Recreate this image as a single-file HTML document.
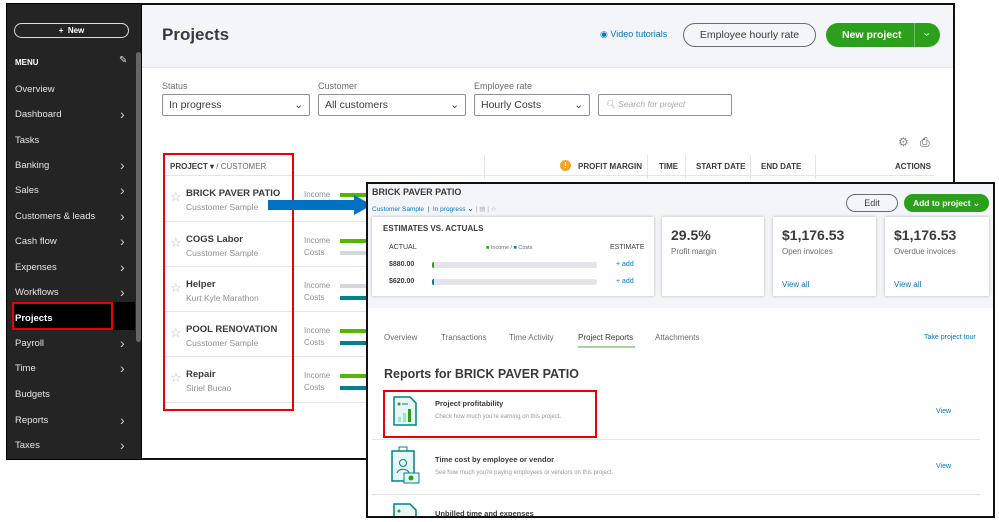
<!DOCTYPE html>
<html><head><meta charset="utf-8"><style>
*{box-sizing:border-box;margin:0;padding:0}
body{width:999px;height:522px;background:#fff;position:relative;overflow:hidden;font-family:"Liberation Sans",sans-serif;color:#393a3d}
.a{position:absolute}
.sb{left:6px;top:3px;width:136px;height:457px;background:#242424;border:1px solid #000}
.mi{position:absolute;left:8px;font-size:9.5px;color:#e6e6e6}
.ch{position:absolute;left:113px;font-size:14px;color:#ccc;line-height:14px}
.main{left:142px;top:3px;width:813px;height:457px;background:#fff;border:2px solid #111;border-left:none}
.lbl{font-size:9px;color:#6b6c72}
.sel{height:22px;border:1px solid #8d9096;border-radius:2px;font-size:10.5px;padding:4px 6px;color:#393a3d}
.row{position:absolute;left:164px;width:770px;border-top:1px solid #e3e5e8}
.nm{position:absolute;left:22px;font-size:9.5px;font-weight:bold;color:#393a3d}
.cu{position:absolute;left:22px;font-size:8.5px;color:#8d9096}
.st{position:absolute;left:6px;font-size:13px;color:#bbb}
.ic{position:absolute;left:140px;font-size:8px;color:#8d9096}
.bar{position:absolute;left:176px;height:4px;width:30px}
.card{position:absolute;background:#fff;box-shadow:0 0 3px rgba(0,0,0,.25);top:217px;height:79px}
.big{font-size:14px;font-weight:bold;color:#393a3d}
.sm{font-size:8px;color:#6b6c72}
.blue{color:#0077c5}
</style></head><body>
<div class="a sb">
 <div class="a" style="left:7px;top:19px;width:115px;height:15px;border:1px solid #ddd;border-radius:8px;color:#fff;font-size:8px;font-weight:bold;text-align:center;line-height:13px">+&nbsp; New</div>
 <div class="mi" style="top:54px;font-weight:bold;font-size:8px;color:#fff">MENU</div>
 <div class="a" style="left:112px;top:51px;color:#ddd;font-size:10px">✎</div>
 <div class="a" style="left:129px;top:48px;width:5px;height:290px;background:#666;border-radius:3px"></div>
 <div class="mi" style="top:80px">Overview</div>
 <div class="mi" style="top:105px">Dashboard</div><div class="ch" style="top:103px">›</div>
 <div class="mi" style="top:131px">Tasks</div>
 <div class="mi" style="top:156px">Banking</div><div class="ch" style="top:154px">›</div>
 <div class="mi" style="top:181px">Sales</div><div class="ch" style="top:179px">›</div>
 <div class="mi" style="top:207px">Customers &amp; leads</div><div class="ch" style="top:205px">›</div>
 <div class="mi" style="top:232px">Cash flow</div><div class="ch" style="top:230px">›</div>
 <div class="mi" style="top:258px">Expenses</div><div class="ch" style="top:256px">›</div>
 <div class="mi" style="top:283px">Workflows</div><div class="ch" style="top:281px">›</div>
 <div class="a" style="left:5px;top:298px;width:123px;height:28px;background:#000"></div>
 <div class="a" style="left:5px;top:298px;width:101px;height:28px;border:2px solid #e00"></div>
 <div class="mi" style="top:309px;color:#fff;font-weight:bold">Projects</div>
 <div class="mi" style="top:334px">Payroll</div><div class="ch" style="top:332px">›</div>
 <div class="mi" style="top:359px">Time</div><div class="ch" style="top:357px">›</div>
 <div class="mi" style="top:385px">Budgets</div>
 <div class="mi" style="top:411px">Reports</div><div class="ch" style="top:409px">›</div>
 <div class="mi" style="top:436px">Taxes</div><div class="ch" style="top:434px">›</div>
</div>
<div class="a main">
 <div class="a" style="left:0;top:0;width:811px;height:63px;background:#f4f5f8;border-bottom:1px solid #e3e5e8"></div>
 <div class="a" style="left:20px;top:20px;font-size:17px;font-weight:bold;color:#393a3d">Projects</div>
 <div class="a blue" style="left:458px;top:24px;font-size:9px">◉ Video tutorials</div>
 <div class="a" style="left:541px;top:18px;width:133px;height:24px;border:1px solid #6b6c72;border-radius:12px;font-size:10.5px;text-align:center;line-height:22px">Employee hourly rate</div>
 <div class="a" style="left:684px;top:18px;width:114px;height:24px;background:#2ca01c;border-radius:12px;color:#fff;font-size:10.5px;font-weight:bold;line-height:24px;padding-left:16px">New project</div>
 <div class="a" style="left:772px;top:18px;width:1px;height:24px;background:#6ec060"></div>
 <div class="a" style="left:780px;top:21px;color:#fff;font-size:11px">⌄</div>
 <div class="a lbl" style="left:20px;top:76px">Status</div>
 <div class="a lbl" style="left:176px;top:76px">Customer</div>
 <div class="a lbl" style="left:332px;top:76px">Employee rate</div>
 <div class="a sel" style="left:20px;top:89px;width:148px">In progress<span style="float:right">⌄</span></div>
 <div class="a sel" style="left:176px;top:89px;width:148px">All customers<span style="float:right">⌄</span></div>
 <div class="a sel" style="left:332px;top:89px;width:116px">Hourly Costs<span style="float:right">⌄</span></div>
 <div class="a sel" style="left:456px;top:89px;width:134px;font-size:8.5px;color:#aaa;font-style:italic">🔍︎ Search for project</div>
 <div class="a" style="left:756px;top:130px;color:#888;font-size:12px">⚙</div>
 <div class="a" style="left:778px;top:130px;color:#444;font-size:12px">⎙</div>
 <div class="a" style="left:28px;top:157px;font-size:8px;font-weight:bold">PROJECT ▾ <span style="font-weight:normal;color:#6b6c72">/ CUSTOMER</span></div>
 <div class="a" style="left:418px;top:155px;width:11px;height:11px;border-radius:6px;background:#f5a623;color:#fff;font-size:8px;font-weight:bold;text-align:center;line-height:11px">!</div>
 <div class="a" style="left:436px;top:157px;font-size:8px;font-weight:bold">PROFIT MARGIN</div>
 <div class="a" style="left:517px;top:157px;font-size:8px;font-weight:bold">TIME</div>
 <div class="a" style="left:554px;top:157px;font-size:8px;font-weight:bold">START DATE</div>
 <div class="a" style="left:619px;top:157px;font-size:8px;font-weight:bold">END DATE</div>
 <div class="a" style="left:753px;top:157px;font-size:8px;font-weight:bold">ACTIONS</div>
 <div class="a" style="left:342px;top:150px;width:1px;height:24px;background:#e3e5e8"></div>
 <div class="a" style="left:505px;top:150px;width:1px;height:24px;background:#e3e5e8"></div>
 <div class="a" style="left:543px;top:150px;width:1px;height:24px;background:#e3e5e8"></div>
 <div class="a" style="left:608px;top:150px;width:1px;height:24px;background:#e3e5e8"></div>
 <div class="a" style="left:673px;top:150px;width:1px;height:24px;background:#e3e5e8"></div>
</div>
<div class="row" style="top:175px;height:45px"><div class="st" style="top:13px">☆</div><div class="nm" style="top:12px">BRICK PAVER PATIO</div><div class="cu" style="top:26px">Cusstomer Sample</div><div class="ic" style="top:14px">Income</div><div class="bar" style="top:17px;background:#53b700"></div></div>
<div class="row" style="top:221px;height:45px"><div class="st" style="top:13px">☆</div><div class="nm" style="top:12px">COGS Labor</div><div class="cu" style="top:26px">Cusstomer Sample</div><div class="ic" style="top:14px">Income</div><div class="bar" style="top:17px;background:#53b700"></div><div class="ic" style="top:26px">Costs</div><div class="bar" style="top:29px;background:#d4d7dc"></div></div>
<div class="row" style="top:266px;height:45px"><div class="st" style="top:13px">☆</div><div class="nm" style="top:12px">Helper</div><div class="cu" style="top:26px">Kurt Kyle Marathon</div><div class="ic" style="top:14px">Income</div><div class="bar" style="top:17px;background:#d4d7dc"></div><div class="ic" style="top:26px">Costs</div><div class="bar" style="top:29px;background:#00828a"></div></div>
<div class="row" style="top:311px;height:45px"><div class="st" style="top:13px">☆</div><div class="nm" style="top:12px">POOL RENOVATION</div><div class="cu" style="top:26px">Cusstomer Sample</div><div class="ic" style="top:14px">Income</div><div class="bar" style="top:17px;background:#53b700"></div><div class="ic" style="top:26px">Costs</div><div class="bar" style="top:29px;background:#00828a"></div></div>
<div class="row" style="top:356px;height:47px;border-bottom:1px solid #e3e5e8"><div class="st" style="top:13px">☆</div><div class="nm" style="top:12px">Repair</div><div class="cu" style="top:26px">Siriel Bucao</div><div class="ic" style="top:14px">Income</div><div class="bar" style="top:17px;background:#53b700"></div><div class="ic" style="top:26px">Costs</div><div class="bar" style="top:29px;background:#00828a"></div></div>
<div class="a" style="left:163px;top:153px;width:131px;height:258px;border:2px solid #e00"></div>
<div class="a" style="left:268px;top:200px;width:88px;height:10px;background:#0070c0"></div>
<div class="a" style="left:354px;top:195px;width:0;height:0;border-top:10px solid transparent;border-bottom:10px solid transparent;border-left:18px solid #0070c0"></div>
<div class="a" style="left:366px;top:182px;width:629px;height:336px;border:2px solid #111;background:#fff">
 <div class="a" style="left:0;top:0;width:625px;height:124px;background:#f4f5f8"></div>
 <div class="a" style="left:4px;top:3px;font-size:9px;font-weight:bold">BRICK PAVER PATIO</div>
 <div class="a blue" style="left:4px;top:20px;font-size:6.5px">Customer Sample &nbsp;|&nbsp; In progress <span style="color:#333;font-size:8px">⌄</span> <span style="color:#aaa">| ▤ | ☆</span></div>
 <div class="a" style="left:478px;top:10px;width:52px;height:18px;border:1px solid #6b6c72;border-radius:9px;font-size:9px;text-align:center;line-height:16px">Edit</div>
 <div class="a" style="left:536px;top:10px;width:85px;height:18px;background:#2ca01c;border-radius:9px;color:#fff;font-size:8.5px;font-weight:bold;text-align:center;line-height:18px">Add to project ⌄</div>
 <div class="card" style="left:4px;top:33px;width:282px">
  <div class="a" style="left:11px;top:7px;font-size:8px;font-weight:bold">ESTIMATES VS. ACTUALS</div>
  <div class="a" style="left:17px;top:27px;font-size:7px">ACTUAL</div>
  <div class="a" style="left:114px;top:28px;font-size:5.5px;color:#6b6c72"><span style="color:#2ca01c">■</span> Income / <span style="color:#00828a">■</span> Costs</div>
  <div class="a" style="left:238px;top:27px;font-size:7px">ESTIMATE</div>
  <div class="a" style="left:17px;top:44px;font-size:7px;font-weight:bold">$880.00</div>
  <div class="a" style="left:60px;top:45px;width:165px;height:6px;background:#e3e5e8;border-left:2px solid #2ca01c;border-radius:2px"></div>
  <div class="a blue" style="left:244px;top:44px;font-size:7px">+ add</div>
  <div class="a" style="left:17px;top:61px;font-size:7px;font-weight:bold">$620.00</div>
  <div class="a" style="left:60px;top:62px;width:165px;height:6px;background:#e3e5e8;border-left:2px solid #00828a;border-radius:2px"></div>
  <div class="a blue" style="left:244px;top:61px;font-size:7px">+ add</div>
 </div>
 <div class="card" style="left:294px;top:33px;width:102px"><div class="a big" style="left:9px;top:10px">29.5%</div><div class="a sm" style="left:9px;top:30px">Profit margin</div></div>
 <div class="card" style="left:405px;top:33px;width:103px"><div class="a big" style="left:9px;top:10px">$1,176.53</div><div class="a sm" style="left:9px;top:30px">Open invoices</div><div class="a blue" style="left:9px;top:63px;font-size:8px">View all</div></div>
 <div class="card" style="left:517px;top:33px;width:104px"><div class="a big" style="left:9px;top:10px">$1,176.53</div><div class="a sm" style="left:9px;top:30px">Overdue invoices</div><div class="a blue" style="left:9px;top:63px;font-size:8px">View all</div></div>
 <div class="a" style="left:16px;top:149px;font-size:8px;color:#6b6c72">Overview</div>
 <div class="a" style="left:73px;top:149px;font-size:8px;color:#6b6c72">Transactions</div>
 <div class="a" style="left:141px;top:149px;font-size:8px;color:#6b6c72">Time Activity</div>
 <div class="a" style="left:210px;top:149px;font-size:8px;color:#393a3d">Project Reports</div>
 <div class="a" style="left:210px;top:162px;width:57px;height:2px;background:#a7d49b"></div>
 <div class="a" style="left:287px;top:149px;font-size:8px;color:#6b6c72">Attachments</div>
 <div class="a blue" style="left:556px;top:150px;font-size:7px">Take project tour</div>
 <div class="a" style="left:16px;top:183px;font-size:12.5px;font-weight:bold;color:#393a3d">Reports for BRICK PAVER PATIO</div>
 <svg class="a" style="left:24px;top:211px" width="26" height="32"><path d="M2 2h16l6 6v22H2z" fill="#e6f7f4" stroke="#00828a" stroke-width="1.5"/><circle cx="7" cy="9" r="1.5" fill="#2ca01c"/><path d="M10 9h6" stroke="#00828a"/><rect x="6" y="22" width="3" height="5" fill="#9fe0d7"/><rect x="11" y="18" width="3" height="9" fill="#9fe0d7"/><rect x="16" y="14" width="3" height="13" fill="#2ca01c"/></svg>
 <div class="a" style="left:67px;top:215px;font-size:7.5px;font-weight:bold">Project profitability</div>
 <div class="a" style="left:67px;top:230px;font-size:6px;color:#999">Check how much you're earning on this project.</div>
 <div class="a blue" style="left:568px;top:224px;font-size:7px">View</div>
 <div class="a" style="left:15px;top:206px;width:214px;height:48px;border:2px solid #e00"></div>
 <div class="a" style="left:4px;top:255px;width:608px;height:1px;background:#e3e5e8"></div>
 <svg class="a" style="left:22px;top:262px" width="32" height="40"><rect x="9" y="1" width="8" height="6" fill="none" stroke="#00828a"/><rect x="2" y="5" width="22" height="30" fill="#e6f7f4" stroke="#00828a" stroke-width="1.5"/><circle cx="13" cy="17" r="3.5" fill="none" stroke="#00828a"/><path d="M7 27c1-5 11-5 12 0" fill="none" stroke="#00828a"/><rect x="14" y="27" width="15" height="10" fill="#e6f7f4" stroke="#00828a"/><circle cx="21" cy="32" r="2.5" fill="#2ca01c"/></svg>
 <div class="a" style="left:67px;top:271px;font-size:7.5px;font-weight:bold">Time cost by employee or vendor</div>
 <div class="a" style="left:67px;top:286px;font-size:6px;color:#999">See how much you're paying employees or vendors on this project.</div>
 <div class="a blue" style="left:568px;top:279px;font-size:7px">View</div>
 <div class="a" style="left:4px;top:310px;width:608px;height:1px;background:#e3e5e8"></div>
 <svg class="a" style="left:24px;top:318px" width="26" height="14"><path d="M2 14V2h16l6 6v6" fill="#e6f7f4" stroke="#00828a" stroke-width="1.5"/><circle cx="7" cy="9" r="1.5" fill="#2ca01c"/></svg>
 <div class="a" style="left:67px;top:325px;font-size:7.5px;font-weight:bold">Unbilled time and expenses</div>
</div>
</body></html>
